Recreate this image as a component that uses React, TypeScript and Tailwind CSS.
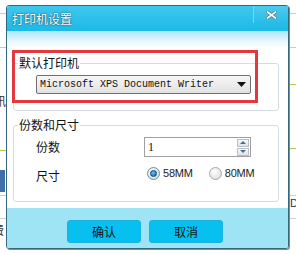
import React, { useState } from "react";

const cjk = "font-['Noto_Sans_CJK_SC','Liberation_Sans',sans-serif]";

function Radio({ checked, label, onClick }: { checked: boolean; label: string; onClick: () => void }) {
  return (
    <button type="button" onClick={onClick} className="flex items-center gap-[3px]">
      <span
        className={`w-[13px] h-[13px] rounded-full border flex items-center justify-center ${
          checked
            ? "border-[#6d8ea6] bg-[radial-gradient(circle_at_40%_35%,#ffffff,#c8d6e0)]"
            : "border-[#a3a9ae] bg-[radial-gradient(circle_at_40%_35%,#ffffff,#d4d6d8)]"
        }`}
      >
        {checked && (
          <span className="w-[7px] h-[7px] rounded-full bg-[radial-gradient(circle_at_40%_35%,#6ec6f2,#0c5f9e)] border border-[#0a4a7a]" />
        )}
      </span>
      <span className="text-[11px] leading-[13px] text-[#222] font-['Liberation_Sans_Narrow','Liberation_Sans',sans-serif] tracking-[-0.2px]">
        {label}
      </span>
    </button>
  );
}

function App() {
  const [copies, setCopies] = useState(1);
  const [size, setSize] = useState("58");

  return (
    <div className={`relative w-[296px] h-[254px] bg-white overflow-hidden ${cjk}`}>
      {/* things of the window behind */}
      <div className="absolute left-0 right-0 top-[13px] h-px bg-[#c9c9c9]" />
      <div className="absolute left-0 right-0 top-[47px] h-px bg-[#c9c9c9]" />
      <div className="absolute right-0 top-[84px] w-[6px] h-px bg-[#c8c040]" />
      <div className="absolute left-0 top-[150px] w-[6px] h-px bg-[#b8c050]" />
      <div className="absolute right-0 top-[148px] w-[6px] h-px bg-[#b8c050]" />
      <div className="absolute left-0 top-[170px] w-[5px] h-[22px] bg-[#3e6fa8]" />
      <div className="absolute left-0 right-0 top-[195px] h-px bg-[#cfcfcf]" />
      <div className="absolute left-0 right-0 top-[218px] h-px bg-[#cfcfcf]" />
      <span className="absolute left-[-8px] top-[223px] text-[12px] leading-[14px] text-[#333]">费</span>
      <span className="absolute left-[-6px] top-[94px] text-[12px] leading-[14px] text-[#333]">讯</span>
      <span className="absolute left-[290px] top-[197px] text-[11px] leading-[12px] text-[#333] font-['Liberation_Sans',sans-serif]">D</span>

      {/* dialog */}
      <div className="absolute left-[6px] top-[5px] w-[283px] h-[244px] border border-[#35687e] rounded-[3px] flex flex-col overflow-hidden shadow-[1px_1px_0_#7c8c94]">
        <div className="h-[25px] flex justify-between bg-[linear-gradient(to_bottom,#3fc7ee,#1db9e6)]">
          <span className="pl-[5px] pt-[6px] text-[12px] leading-[14px] text-white [text-shadow:0_0_1px_#1b4f63,0_0_2px_#1b4f63]">
            打印机设置
          </span>
          <button
            type="button"
            className="w-[35px] h-[17px] border-l border-[#7fd6f2] flex items-center justify-center bg-[linear-gradient(to_bottom,#4ccbf0,#27bde8)]"
          >
            <svg width="11" height="8" viewBox="0 0 11 8">
              <path d="M1.5 1 L9.5 7 M9.5 1 L1.5 7" stroke="#5f7a86" strokeWidth="3.2" strokeLinecap="square" />
              <path d="M1.5 1 L9.5 7 M9.5 1 L1.5 7" stroke="#ffffff" strokeWidth="1.6" strokeLinecap="square" />
            </svg>
          </button>
        </div>

        <div className="relative h-[177px] pt-[25px] bg-[linear-gradient(to_bottom,#ade6f7_0px,#e6f7fd_10px,#ffffff_17px)]">
          <fieldset className="ml-[6px] w-[266px] border border-[#d3dde3] rounded-[3px] pb-[16px]">
            <legend className="ml-[4px] px-[1px] text-[12px] leading-[14px] text-[#111]">默认打印机</legend>
            <div className="mt-[5px] ml-[22px] w-[215px] h-[19px] border border-[#707070] rounded-[2px] bg-[linear-gradient(to_bottom,#f6f6f6,#e2e2e2)] flex items-center justify-between pl-[3px] pr-[4px]">
              <span className="text-[10px] leading-[12px] text-[#111] font-['Liberation_Mono',monospace] whitespace-pre">
                Microsoft XPS Document Writer
              </span>
              <svg width="9" height="5" viewBox="0 0 9 5">
                <path d="M0 0 H9 L4.5 5 Z" fill="#111" />
              </svg>
            </div>
          </fieldset>

          <fieldset className="mt-[7px] ml-[6px] w-[266px] border border-[#d3dde3] rounded-[3px] pb-[19px]">
            <legend className="ml-[4px] px-[1px] text-[12px] leading-[14px] text-[#111]">份数和尺寸</legend>
            <div className="mt-[5px] flex items-center h-[20px]">
              <span className="w-[130px] pl-[22px] text-[12px] leading-[14px] text-[#111]">份数</span>
              <div className="w-[107px] h-[20px] border border-[#a0a0a0] bg-white flex items-center justify-between pl-[3px] pr-[1px]">
                <span className="text-[12px] leading-[14px] text-[#111] font-['Liberation_Serif',serif]">{copies}</span>
                <div className="flex flex-col gap-[1px]">
                  <button
                    type="button"
                    onClick={() => setCopies(copies + 1)}
                    className="w-[12px] h-[8px] border border-[#b7c0c8] bg-[linear-gradient(to_bottom,#f7f9fb,#dde3e8)] flex items-center justify-center"
                  >
                    <svg width="6" height="3" viewBox="0 0 6 3">
                      <path d="M0 3 L3 0 L6 3 Z" fill="#4c6a86" />
                    </svg>
                  </button>
                  <button
                    type="button"
                    onClick={() => setCopies(Math.max(1, copies - 1))}
                    className="w-[12px] h-[8px] border border-[#b7c0c8] bg-[linear-gradient(to_bottom,#f7f9fb,#dde3e8)] flex items-center justify-center"
                  >
                    <svg width="6" height="3" viewBox="0 0 6 3">
                      <path d="M0 0 L6 0 L3 3 Z" fill="#4c6a86" />
                    </svg>
                  </button>
                </div>
              </div>
            </div>
            <div className="mt-[9px] flex items-start h-[16px]">
              <span className="w-[133px] pl-[22px] pt-[3px] text-[12px] leading-[14px] text-[#111]">尺寸</span>
              <div className="flex items-center gap-[16px] pt-[1px]">
                <Radio checked={size === "58"} label="58MM" onClick={() => setSize("58")} />
                <Radio checked={size === "80"} label="80MM" onClick={() => setSize("80")} />
              </div>
            </div>
          </fieldset>

          {/* highlight drawn over the first group */}
          <div className="absolute left-[5px] top-[19px] w-[246px] h-[53px] border-[3px] border-[#e5383c] pointer-events-none" />
        </div>

        <div className="flex-1 bg-[#9fe4f5] flex gap-[8px] pl-[60px] pt-[12px]">
          <button
            type="button"
            className="w-[74px] h-[23px] rounded-[3px] bg-[#07c0ef] border border-[#19b3e0] text-[12px] leading-[14px] text-[#111]"
          >
            确认
          </button>
          <button
            type="button"
            className="w-[74px] h-[23px] rounded-[3px] bg-[#07c0ef] border border-[#19b3e0] text-[12px] leading-[14px] text-[#111]"
          >
            取消
          </button>
        </div>
      </div>
    </div>
  );
}

export default App;
